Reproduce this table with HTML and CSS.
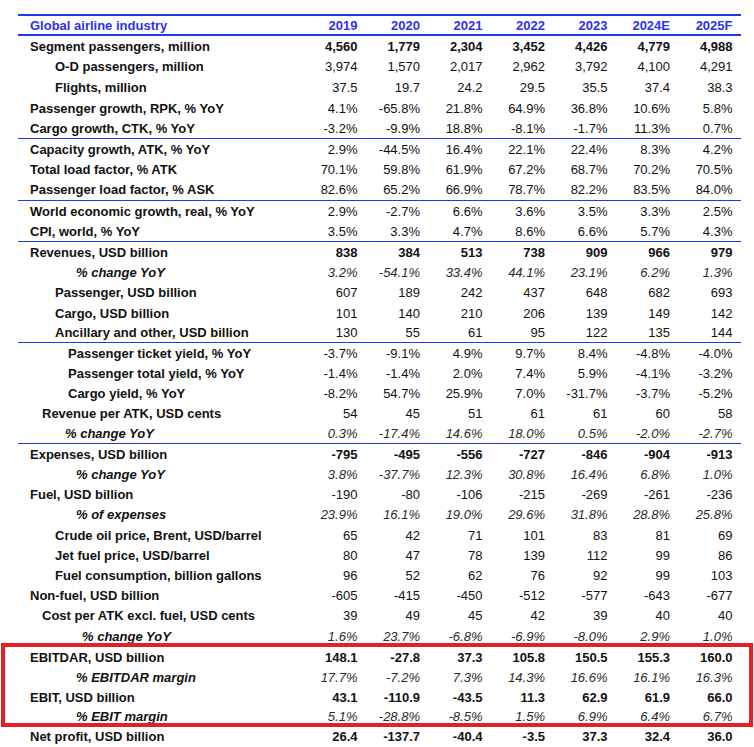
FILE: index.html
```html
<!DOCTYPE html>
<html>
<head>
<meta charset="utf-8">
<link rel="stylesheet" href="styles.css">
</head>
<body>
<div class="table">
  <div class="row head"><div class="lbl i0">Global airline industry</div><div>2019</div><div>2020</div><div>2021</div><div>2022</div><div>2023</div><div>2024E</div><div>2025F</div></div>

  <div class="row tall b"><div class="lbl i0">Segment passengers, million</div><div>4,560</div><div>1,779</div><div>2,304</div><div>3,452</div><div>4,426</div><div>4,779</div><div>4,988</div></div>
  <div class="row tall"><div class="lbl i2">O-D passengers, million</div><div>3,974</div><div>1,570</div><div>2,017</div><div>2,962</div><div>3,792</div><div>4,100</div><div>4,291</div></div>
  <div class="row tall"><div class="lbl i2">Flights, million</div><div>37.5</div><div>19.7</div><div>24.2</div><div>29.5</div><div>35.5</div><div>37.4</div><div>38.3</div></div>
  <div class="row tall"><div class="lbl i0">Passenger growth, RPK, % YoY</div><div>4.1%</div><div>-65.8%</div><div>21.8%</div><div>64.9%</div><div>36.8%</div><div>10.6%</div><div>5.8%</div></div>
  <div class="row tall sep"><div class="lbl i0">Cargo growth, CTK, % YoY</div><div>-3.2%</div><div>-9.9%</div><div>18.8%</div><div>-8.1%</div><div>-1.7%</div><div>11.3%</div><div>0.7%</div></div>

  <div class="row tall"><div class="lbl i0">Capacity growth, ATK, % YoY</div><div>2.9%</div><div>-44.5%</div><div>16.4%</div><div>22.1%</div><div>22.4%</div><div>8.3%</div><div>4.2%</div></div>
  <div class="row tall"><div class="lbl i0">Total load factor, % ATK</div><div>70.1%</div><div>59.8%</div><div>61.9%</div><div>67.2%</div><div>68.7%</div><div>70.2%</div><div>70.5%</div></div>
  <div class="row tall sep"><div class="lbl i0">Passenger load factor, % ASK</div><div>82.6%</div><div>65.2%</div><div>66.9%</div><div>78.7%</div><div>82.2%</div><div>83.5%</div><div>84.0%</div></div>

  <div class="row tall"><div class="lbl i0">World economic growth, real, % YoY</div><div>2.9%</div><div>-2.7%</div><div>6.6%</div><div>3.6%</div><div>3.5%</div><div>3.3%</div><div>2.5%</div></div>
  <div class="row tall sep"><div class="lbl i0">CPI, world, % YoY</div><div>3.5%</div><div>3.3%</div><div>4.7%</div><div>8.6%</div><div>6.6%</div><div>5.7%</div><div>4.3%</div></div>

  <div class="row tall b"><div class="lbl i0">Revenues, USD billion</div><div>838</div><div>384</div><div>513</div><div>738</div><div>909</div><div>966</div><div>979</div></div>
  <div class="row it"><div class="lbl i5">% change YoY</div><div>3.2%</div><div>-54.1%</div><div>33.4%</div><div>44.1%</div><div>23.1%</div><div>6.2%</div><div>1.3%</div></div>
  <div class="row"><div class="lbl i2">Passenger, USD billion</div><div>607</div><div>189</div><div>242</div><div>437</div><div>648</div><div>682</div><div>693</div></div>
  <div class="row"><div class="lbl i2">Cargo, USD billion</div><div>101</div><div>140</div><div>210</div><div>206</div><div>139</div><div>149</div><div>142</div></div>
  <div class="row sep"><div class="lbl i2">Ancillary and other, USD billion</div><div>130</div><div>55</div><div>61</div><div>95</div><div>122</div><div>135</div><div>144</div></div>

  <div class="row"><div class="lbl i4">Passenger ticket yield, % YoY</div><div>-3.7%</div><div>-9.1%</div><div>4.9%</div><div>9.7%</div><div>8.4%</div><div>-4.8%</div><div>-4.0%</div></div>
  <div class="row"><div class="lbl i4">Passenger total yield, % YoY</div><div>-1.4%</div><div>-1.4%</div><div>2.0%</div><div>7.4%</div><div>5.9%</div><div>-4.1%</div><div>-3.2%</div></div>
  <div class="row"><div class="lbl i4">Cargo yield, % YoY</div><div>-8.2%</div><div>54.7%</div><div>25.9%</div><div>7.0%</div><div>-31.7%</div><div>-3.7%</div><div>-5.2%</div></div>
  <div class="row"><div class="lbl i1">Revenue per ATK, USD cents</div><div>54</div><div>45</div><div>51</div><div>61</div><div>61</div><div>60</div><div>58</div></div>
  <div class="row it sep"><div class="lbl i3">% change YoY</div><div>0.3%</div><div>-17.4%</div><div>14.6%</div><div>18.0%</div><div>0.5%</div><div>-2.0%</div><div>-2.7%</div></div>

  <div class="row b"><div class="lbl i0">Expenses, USD billion</div><div>-795</div><div>-495</div><div>-556</div><div>-727</div><div>-846</div><div>-904</div><div>-913</div></div>
  <div class="row it"><div class="lbl i5">% change YoY</div><div>3.8%</div><div>-37.7%</div><div>12.3%</div><div>30.8%</div><div>16.4%</div><div>6.8%</div><div>1.0%</div></div>
  <div class="row"><div class="lbl i0">Fuel, USD billion</div><div>-190</div><div>-80</div><div>-106</div><div>-215</div><div>-269</div><div>-261</div><div>-236</div></div>
  <div class="row it"><div class="lbl i5">% of expenses</div><div>23.9%</div><div>16.1%</div><div>19.0%</div><div>29.6%</div><div>31.8%</div><div>28.8%</div><div>25.8%</div></div>
  <div class="row"><div class="lbl i2">Crude oil price, Brent, USD/barrel</div><div>65</div><div>42</div><div>71</div><div>101</div><div>83</div><div>81</div><div>69</div></div>
  <div class="row"><div class="lbl i2">Jet fuel price, USD/barrel</div><div>80</div><div>47</div><div>78</div><div>139</div><div>112</div><div>99</div><div>86</div></div>
  <div class="row"><div class="lbl i2">Fuel consumption, billion gallons</div><div>96</div><div>52</div><div>62</div><div>76</div><div>92</div><div>99</div><div>103</div></div>
  <div class="row"><div class="lbl i0">Non-fuel, USD billion</div><div>-605</div><div>-415</div><div>-450</div><div>-512</div><div>-577</div><div>-643</div><div>-677</div></div>
  <div class="row"><div class="lbl i1">Cost per ATK excl. fuel, USD cents</div><div>39</div><div>49</div><div>45</div><div>42</div><div>39</div><div>40</div><div>40</div></div>
  <div class="row it"><div class="lbl i6">% change YoY</div><div>1.6%</div><div>23.7%</div><div>-6.8%</div><div>-6.9%</div><div>-8.0%</div><div>2.9%</div><div>1.0%</div></div>

  <div class="highlight">
    <div class="row hl b"><div class="lbl i0">EBITDAR, USD billion</div><div>148.1</div><div>-27.8</div><div>37.3</div><div>105.8</div><div>150.5</div><div>155.3</div><div>160.0</div></div>
    <div class="row hl it"><div class="lbl i5">% EBITDAR margin</div><div>17.7%</div><div>-7.2%</div><div>7.3%</div><div>14.3%</div><div>16.6%</div><div>16.1%</div><div>16.3%</div></div>
    <div class="row hl b"><div class="lbl i0">EBIT, USD billion</div><div>43.1</div><div>-110.9</div><div>-43.5</div><div>11.3</div><div>62.9</div><div>61.9</div><div>66.0</div></div>
    <div class="row hl it"><div class="lbl i5">% EBIT margin</div><div>5.1%</div><div>-28.8%</div><div>-8.5%</div><div>1.5%</div><div>6.9%</div><div>6.4%</div><div>6.7%</div></div>
  </div>
  <div class="row b"><div class="lbl i0">Net profit, USD billion</div><div>26.4</div><div>-137.7</div><div>-40.4</div><div>-3.5</div><div>37.3</div><div>32.4</div><div>36.0</div></div>
</div>
</body>
</html>
```

FILE: styles.css
```css
html, body {
  margin: 0;
  padding: 0;
  background: #ffffff;
}

body {
  font-family: "Liberation Sans", Arial, sans-serif;
  font-size: 13px;
  color: #111111;
}

.table {
  margin: 14px 0 0 18px;
  width: 723px;
  border-top: 2px solid #1f3be6;
}

.row {
  display: grid;
  grid-template-columns: 277px repeat(7, 62.5px);
  height: 20.2px;
  align-items: center;
  box-sizing: border-box;
}

.row.tall {
  height: 20.6px;
}

.row.hl {
  height: 19.6px;
}

.row > div {
  text-align: right;
  white-space: nowrap;
  line-height: 15px;
}

.row > .lbl {
  text-align: left;
  font-weight: bold;
  color: #111111;
}

.head {
  height: 20px;
  padding-top: 1px;
  border-bottom: 2px solid #1f3be6;
  color: #2f2ff0;
  font-weight: bold;
}

.head > .lbl {
  color: #2f2ff0;
}

.b > div {
  font-weight: bold;
}

.it > div {
  font-style: italic;
  color: #2a2a2a;
}

.it > .lbl {
  color: #111111;
}

.sep {
  border-bottom: 1px solid #1f3be6;
}

.i0 { padding-left: 12px; }
.i1 { padding-left: 24px; }
.i2 { padding-left: 37px; }
.i3 { padding-left: 47px; }
.i4 { padding-left: 50px; }
.i5 { padding-left: 58px; }
.i6 { padding-left: 64px; }

.highlight {
  position: relative;
  margin-top: 2px;
}

.highlight::after {
  content: "";
  position: absolute;
  left: -17px;
  right: -12px;
  top: -5px;
  bottom: -1px;
  border: 4.5px solid #e32025;
  pointer-events: none;
}
```
